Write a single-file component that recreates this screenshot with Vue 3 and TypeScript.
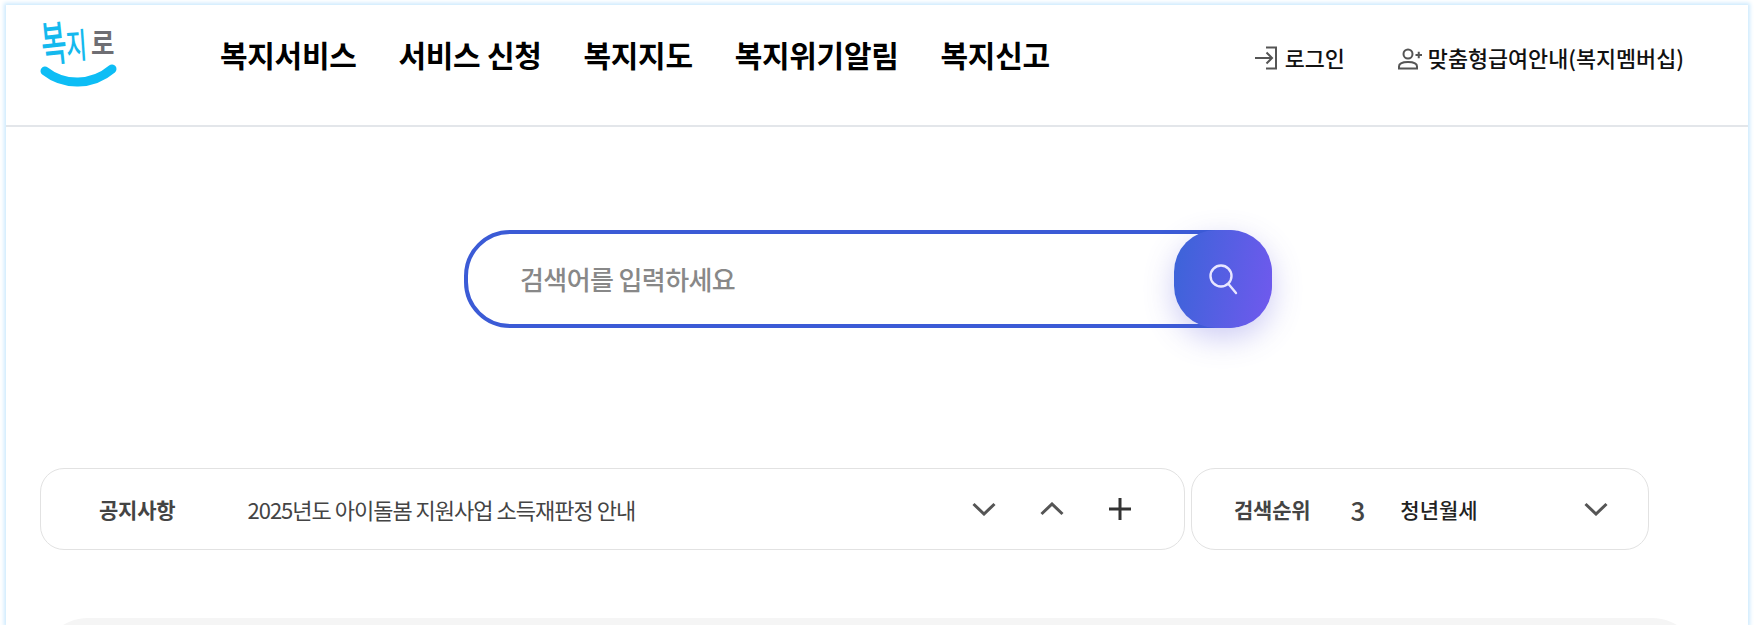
<script setup lang="ts">
// Top navigation entries
const navItems: string[] = ['복지서비스', '서비스 신청', '복지지도', '복지위기알림', '복지신고'];
</script>

<template>
  <div class="frame">
    <header class="header">
      <a class="logo" aria-label="복지로">
        <svg class="logo-mark" width="84" height="72" viewBox="0 0 84 72">
          <text class="logo-char blue" transform="translate(7 45) rotate(-6) scale(1.1 1.9)">복</text>
          <text class="logo-char blue" transform="translate(31 42) rotate(-4) scale(0.9 1.4)">지</text>
          <text class="logo-char gray" transform="translate(55 37) scale(1.02 1.15)">로</text>
          <path d="M9 54 C28 69 56 69 76 52" fill="none" stroke="#0dbdf5" stroke-width="9" stroke-linecap="round" />
        </svg>
      </a>

      <nav class="nav">
        <a v-for="item in navItems" :key="item" class="nav-link">{{ item }}</a>
      </nav>

      <div class="util">
        <a class="util-link">
          <svg width="24" height="24" viewBox="0 0 24 24" fill="none" stroke="#555" stroke-width="2">
            <path d="M11 1.500h10v21H11" />
            <path d="M0 12h17M11.500 6.500l5.500 5.500-5.500 5.500" />
          </svg>
          로그인
        </a>
        <a class="util-link">
          <svg width="24" height="24" viewBox="0 0 24 24" fill="none" stroke="#555" stroke-width="2">
            <circle cx="10" cy="8" r="4.500" />
            <path d="M1 22.500v-2c0-3 3.500-4.500 9-4.500s9 1.500 9 4.500v2z" />
            <path d="M17.500 9h6.500M20.750 5.800v6.400" />
          </svg>
          맞춤형급여안내(복지멤버십)
        </a>
      </div>
    </header>

    <section class="search-area">
      <div class="search-box">
        <input class="search-input" type="text" placeholder="검색어를 입력하세요" />
        <button class="search-btn" type="button" aria-label="검색">
          <svg width="32" height="32" viewBox="0 0 32 32" fill="none" stroke="#e8e6ff" stroke-width="2.400" stroke-linecap="round">
            <circle cx="14" cy="13" r="10.500" />
            <path d="M21.500 21 L29 30" />
          </svg>
        </button>
      </div>
    </section>

    <section class="info-row">
      <div class="notice card">
        <strong class="label">공지사항</strong>
        <span class="notice-text">2025년도 아이돌봄 지원사업 소득재판정 안내</span>
        <div class="controls">
          <svg width="24" height="14" viewBox="0 0 24 14" fill="none" stroke="#555" stroke-width="3">
            <path d="M1.500 2 L12 12 L22.500 2" />
          </svg>
          <svg width="24" height="14" viewBox="0 0 24 14" fill="none" stroke="#555" stroke-width="3">
            <path d="M1.500 12 L12 2 L22.500 12" />
          </svg>
          <svg width="24" height="24" viewBox="0 0 24 24" fill="none" stroke="#333" stroke-width="3">
            <path d="M1 12h22M12 1v22" />
          </svg>
        </div>
      </div>
      <div class="rank card">
        <strong class="label">검색순위</strong>
        <span class="rank-num">3</span>
        <span class="rank-word">청년월세</span>
        <svg class="rank-chev" width="24" height="14" viewBox="0 0 24 14" fill="none" stroke="#555" stroke-width="3">
          <path d="M1.500 2 L12 12 L22.500 2" />
        </svg>
      </div>
    </section>

    <div class="bottom-panel"></div>
  </div>
</template>

<style>
html,
body {
  background: #fff;
}
</style>

<style scoped>
.frame {
  box-sizing: border-box;
  width: 1742px;
  height: 620px;
  margin: 5px 0 0 6px;
  background: #fff;
  box-shadow: 0 0 4px 2px #cdeafe;
  overflow: hidden;
  font-family: 'Noto Sans CJK KR', 'Noto Sans', sans-serif;
}

/* Header */
.header {
  display: flex;
  align-items: center;
  height: 122px;
  box-sizing: border-box;
  border-bottom: 2px solid #e3e6ea;
  padding: 0 64px 0 30px;
}

.logo {
  display: block;
  width: 84px;
  height: 72px;
  margin: -24px 100px 0 0;
  flex: none;
}

.logo-mark {
  overflow: visible;
}

.logo-char {
  font-family: 'Noto Sans CJK KR', sans-serif;
  font-size: 25px;
  font-weight: 500;
}
.logo-char.blue {
  fill: #14b9ee;
}
.logo-char.gray {
  fill: #6e6e73;
  font-weight: 700;
}

.nav {
  display: flex;
  gap: 42px;
  margin-top: -23px;
}

.nav-link {
  font-size: 30px;
  font-weight: 700;
  color: #000;
  letter-spacing: -0.3px;
  white-space: nowrap;
}

.util {
  display: flex;
  align-items: center;
  gap: 53px;
  margin-left: auto;
  margin-top: -15px;
}

.util-link {
  display: flex;
  align-items: center;
  gap: 6px;
  font-size: 21.800px;
  font-weight: 500;
  color: #111;
  white-space: nowrap;
}

/* Search */
.search-area {
  display: flex;
  justify-content: center;
  padding: 103px 18px 0 0;
}

.search-box {
  position: relative;
  box-sizing: border-box;
  display: flex;
  align-items: center;
  width: 808px;
  height: 98px;
  border: 4px solid #3b5bd6;
  border-radius: 46px;
  background: #fff;
}

.search-input {
  flex: 1;
  height: 100%;
  padding: 0 110px 2px 52px;
  box-sizing: border-box;
  border: none;
  outline: none;
  background: transparent;
  font-family: inherit;
  font-size: 26px;
  font-weight: 500;
  letter-spacing: -0.6px;
}
.search-input::placeholder {
  color: #888;
  opacity: 1;
}

.search-btn {
  position: absolute;
  top: -4px;
  right: -4px;
  display: flex;
  align-items: center;
  justify-content: center;
  width: 98px;
  height: 98px;
  padding: 0;
  border: none;
  border-radius: 42px;
  background: linear-gradient(100deg, #3a64d8, #7159ee);
  box-shadow: 0 10px 30px rgba(90, 85, 220, 0.3);
}

/* Notice and ranking */
.info-row {
  display: flex;
  gap: 6px;
  padding: 140px 0 0 34px;
}

.card {
  box-sizing: border-box;
  display: flex;
  align-items: center;
  height: 82px;
  border: 1.500px solid #e2e2e2;
  border-radius: 24px;
  background: #fff;
}

.label {
  font-size: 21px;
  font-weight: 700;
  color: #444;
  letter-spacing: -0.2px;
  white-space: nowrap;
}

.notice {
  width: 1145px;
  padding: 0 52px 0 58px;
}

.notice-text {
  margin-left: 72px;
  font-size: 22px;
  color: #444;
  letter-spacing: -1px;
  white-space: nowrap;
}

.controls {
  display: flex;
  align-items: center;
  gap: 44px;
  margin-left: auto;
}

.rank {
  width: 458px;
  padding: 0 40px 0 42px;
}

.rank-num {
  margin-left: 40px;
  font-size: 26px;
  font-weight: 500;
  color: #444;
}

.rank-word {
  margin-left: 35px;
  font-size: 21px;
  font-weight: 500;
  color: #222;
}

.rank-chev {
  margin-left: auto;
}

/* Next section, only its top edge is visible */
.bottom-panel {
  height: 80px;
  margin: 68px 48px 0 34px;
  border-radius: 48px 48px 0 0;
  background: #f5f5f5;
}
</style>
